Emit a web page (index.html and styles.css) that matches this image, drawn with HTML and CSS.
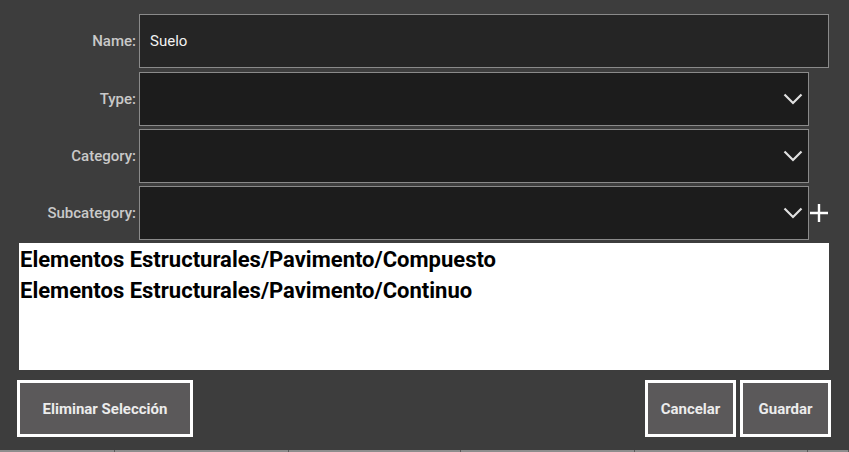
FILE: index.html
```html
<!DOCTYPE html>
<html>
<head>
<meta charset="utf-8">
<link rel="stylesheet" href="styles.css">
</head>
<body>
<div class="dialog">
  <div class="form">
    <div class="row">
      <label class="label">Name:</label>
      <div class="field name-field"><span class="value">Suelo</span></div>
    </div>
    <div class="row">
      <label class="label">Type:</label>
      <div class="field select">
        <svg class="chev" width="20" height="12" viewBox="0 0 20 12"><polyline points="1.5,1.5 10,10 18.5,1.5" fill="none" stroke="#e0e0e0" stroke-width="2.2"/></svg>
      </div>
    </div>
    <div class="row">
      <label class="label">Category:</label>
      <div class="field select">
        <svg class="chev" width="20" height="12" viewBox="0 0 20 12"><polyline points="1.5,1.5 10,10 18.5,1.5" fill="none" stroke="#e0e0e0" stroke-width="2.2"/></svg>
      </div>
    </div>
    <div class="row">
      <label class="label">Subcategory:</label>
      <div class="field select">
        <svg class="chev" width="20" height="12" viewBox="0 0 20 12"><polyline points="1.5,1.5 10,10 18.5,1.5" fill="none" stroke="#e0e0e0" stroke-width="2.2"/></svg>
      </div>
      <svg class="plus" width="20" height="20" viewBox="0 0 20 20"><path d="M10 1V19M1 10H19" stroke="#ffffff" stroke-width="2.4" fill="none"/></svg>
    </div>
  </div>
  <div class="list">
    <div class="item">Elementos Estructurales/Pavimento/Compuesto</div>
    <div class="item">Elementos Estructurales/Pavimento/Continuo</div>
  </div>
  <div class="actions">
    <button class="btn wide">Eliminar Selección</button>
    <div class="spacer"></div>
    <button class="btn">Cancelar</button>
    <button class="btn">Guardar</button>
  </div>
</div>
<div class="tabs">
  <div class="tab" style="width:115px"></div>
  <div class="tab" style="width:174px"></div>
  <div class="tab" style="width:172px"></div>
  <div class="tab" style="width:174px"></div>
  <div class="tab" style="width:173px"></div>
  <div class="tab" style="flex:1"></div>
</div>
</body>
</html>
```
FILE: styles.css
```css
html, body {
  margin: 0;
  padding: 0;
  background: #3d3d3d;
  width: 849px;
  height: 452px;
  overflow: hidden;
  font-family: Roboto, "Noto Sans", sans-serif;
}
.dialog {
  height: 450px;
  display: flex;
  flex-direction: column;
}
.form {
  padding-top: 14px;
  display: flex;
  flex-direction: column;
  gap: 3px;
}
.row {
  display: flex;
  align-items: center;
  height: 54px;
}
.row:first-child {
  margin-bottom: 1px;
}
.label {
  padding-right: 3px;
  box-sizing: border-box;
  width: 139px;
  text-align: right;
  color: #c9c9c9;
  font-size: 15px;
  font-weight: 500;
}
.field {
  box-sizing: border-box;
  height: 54px;
  border: 1.5px solid #8a8a8a;
  display: flex;
  align-items: center;
}
.name-field {
  width: 690px;
  background: #252525;
  padding-left: 10px;
}
.value {
  color: #f2f2f2;
  font-size: 15px;
}
.select {
  width: 670px;
  background: #1c1c1c;
  justify-content: flex-end;
  padding-right: 5px;
}
.chev {
  display: block;
}
.plus {
  display: block;
}
.list {
  margin: 3px 20px 0 19px;
  height: 127px;
  background: #ffffff;
  padding: 1px 0 0 1px;
  box-sizing: border-box;
}
.item {
  font-weight: bold;
  font-size: 22px;
  line-height: 31px;
  color: #000;
  height: 31px;
}
.actions {
  display: flex;
  margin-top: 10px;
  padding: 0 18px 0 17px;
  gap: 4px;
}
.spacer {
  flex: 1;
}
.btn {
  height: 57px;
  width: 91px;
  background: #5b595a;
  border: 3px solid #ffffff;
  color: #ececec;
  font-family: Roboto, "Noto Sans", sans-serif;
  font-weight: bold;
  font-size: 15px;
  padding: 0;
}
.btn.wide {
  width: 176px;
}
.tabs {
  display: flex;
  height: 2px;
}
.tab {
  background: #8e8e8e;
  border-right: 1px solid #5a5a5a;
  box-sizing: border-box;
}
```
